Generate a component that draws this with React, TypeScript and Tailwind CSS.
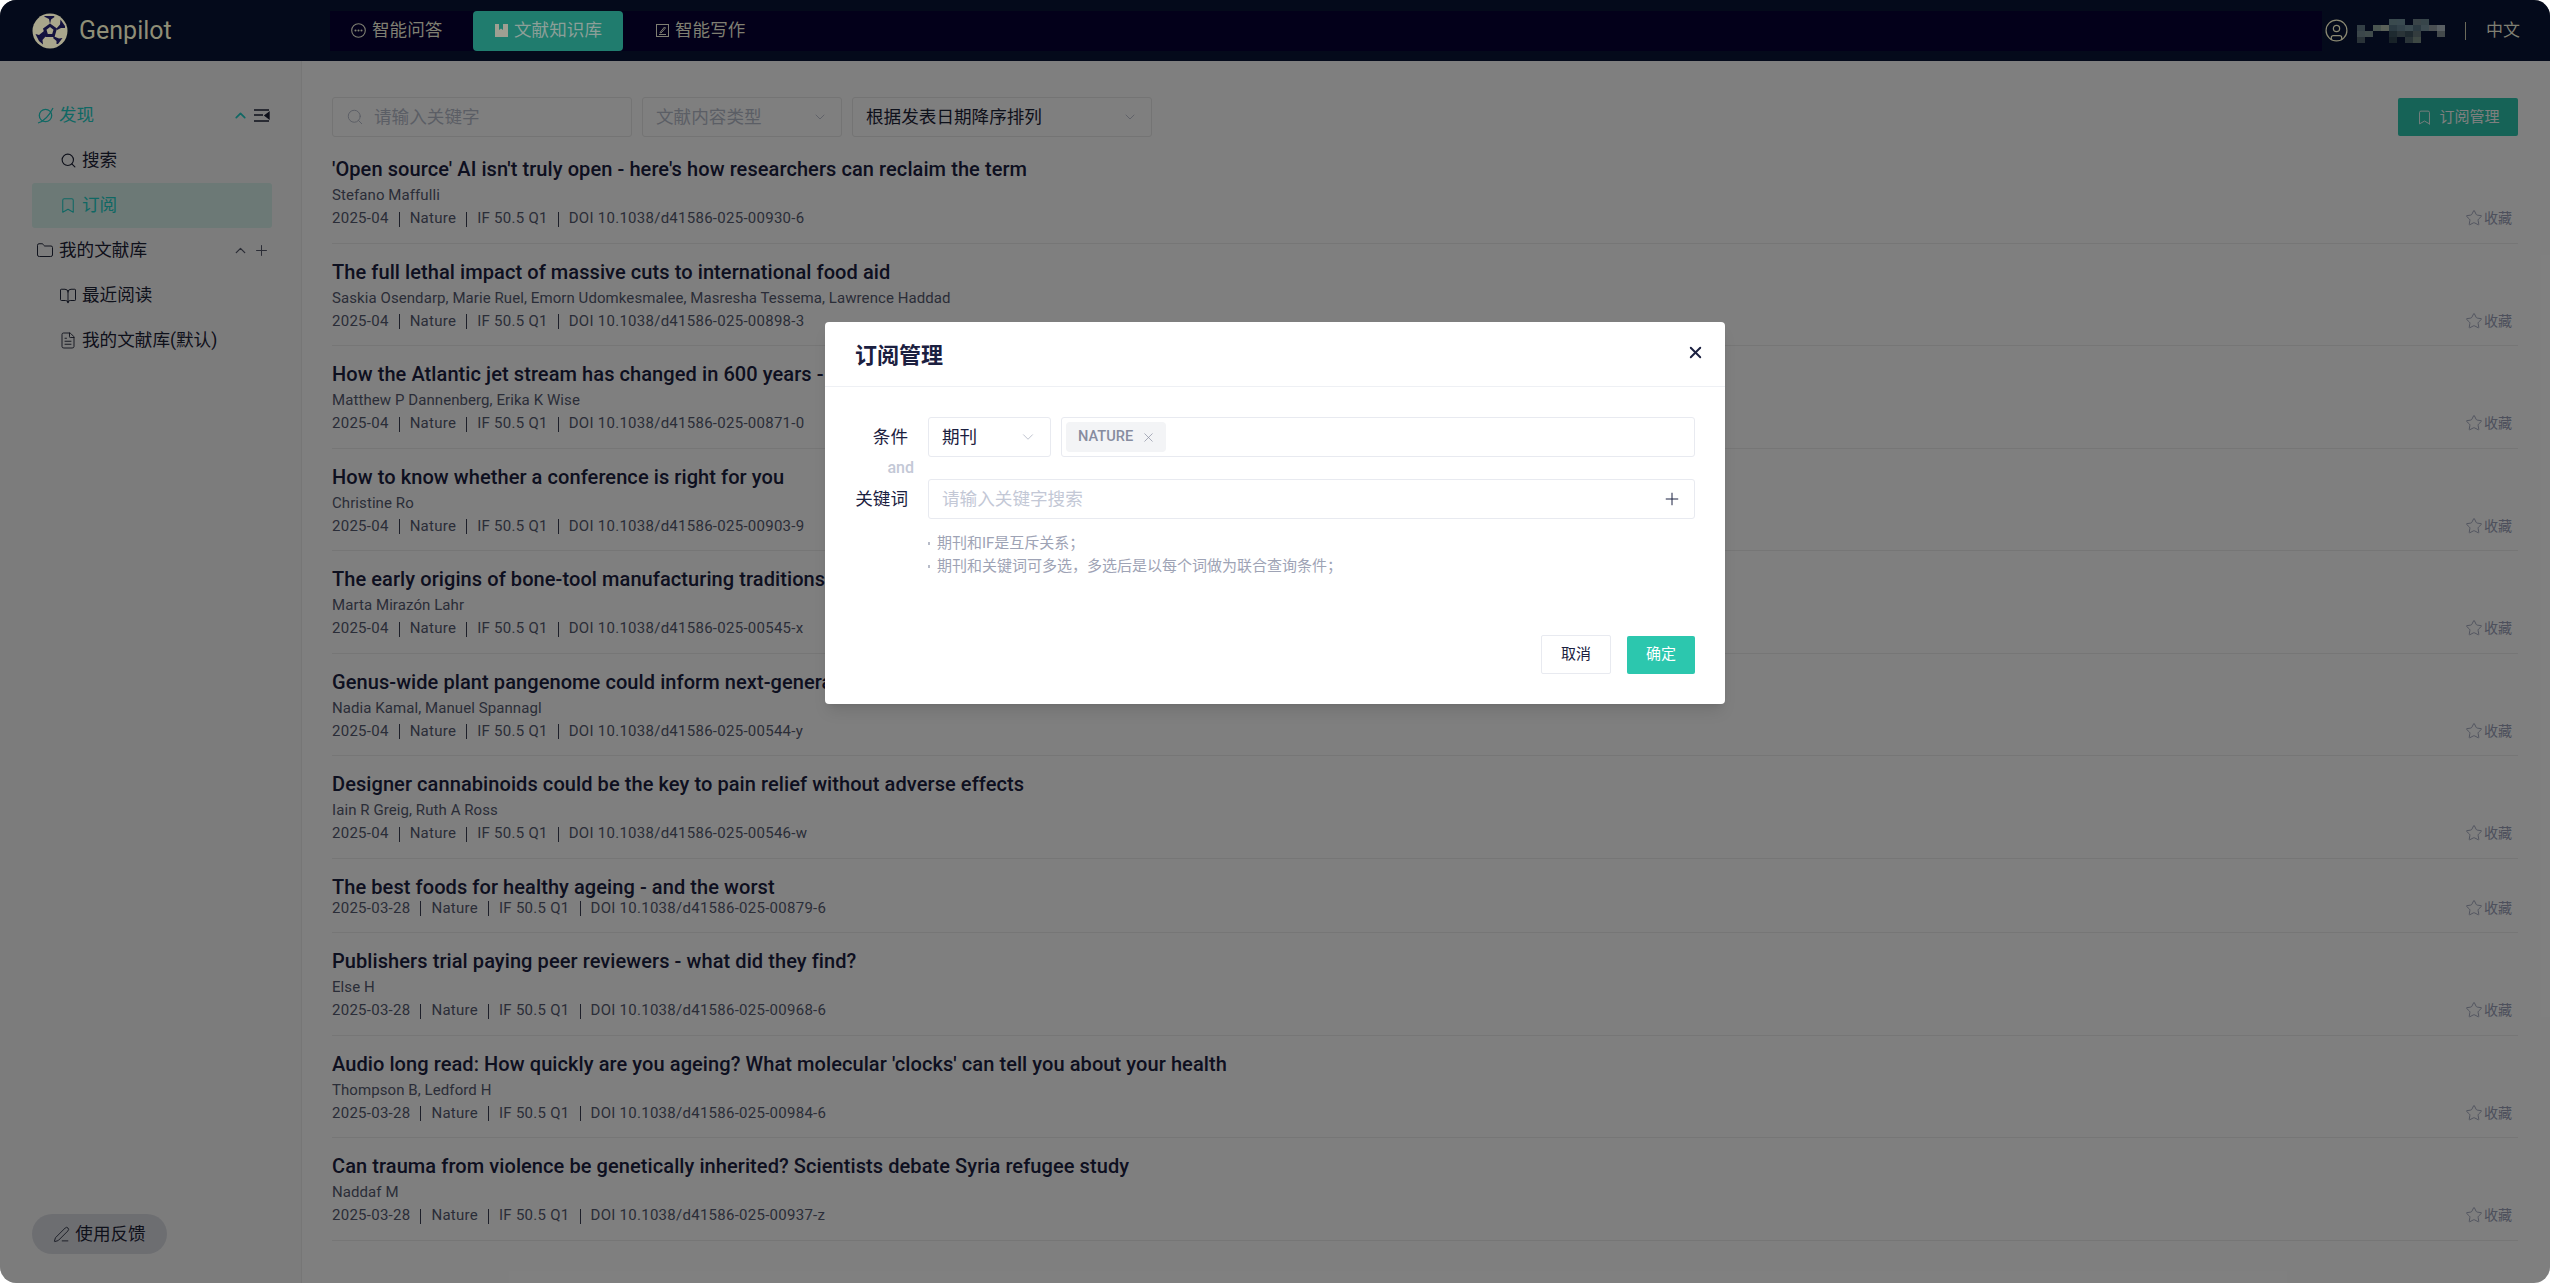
import { Bookmark, BookOpen, ChevronDown, ChevronUp, CircleUser, FileText, Folder, Plus, Search, Star, X, PenLine } from "lucide-react";

type Paper = { title: string; authors?: string; date: string; doi: string };

const papers: Paper[] = [
  { title: "'Open source' AI isn't truly open - here's how researchers can reclaim the term", authors: "Stefano Maffulli", date: "2025-04", doi: "10.1038/d41586-025-00930-6" },
  { title: "The full lethal impact of massive cuts to international food aid", authors: "Saskia Osendarp, Marie Ruel, Emorn Udomkesmalee, Masresha Tessema, Lawrence Haddad", date: "2025-04", doi: "10.1038/d41586-025-00898-3" },
  { title: "How the Atlantic jet stream has changed in 600 years -", authors: "Matthew P Dannenberg, Erika K Wise", date: "2025-04", doi: "10.1038/d41586-025-00871-0" },
  { title: "How to know whether a conference is right for you", authors: "Christine Ro", date: "2025-04", doi: "10.1038/d41586-025-00903-9" },
  { title: "The early origins of bone-tool manufacturing traditions", authors: "Marta Mirazón Lahr", date: "2025-04", doi: "10.1038/d41586-025-00545-x" },
  { title: "Genus-wide plant pangenome could inform next-generation", authors: "Nadia Kamal, Manuel Spannagl", date: "2025-04", doi: "10.1038/d41586-025-00544-y" },
  { title: "Designer cannabinoids could be the key to pain relief without adverse effects", authors: "Iain R Greig, Ruth A Ross", date: "2025-04", doi: "10.1038/d41586-025-00546-w" },
  { title: "The best foods for healthy ageing - and the worst", date: "2025-03-28", doi: "10.1038/d41586-025-00879-6" },
  { title: "Publishers trial paying peer reviewers - what did they find?", authors: "Else H", date: "2025-03-28", doi: "10.1038/d41586-025-00968-6" },
  { title: "Audio long read: How quickly are you ageing? What molecular 'clocks' can tell you about your health", authors: "Thompson B, Ledford H", date: "2025-03-28", doi: "10.1038/d41586-025-00984-6" },
  { title: "Can trauma from violence be genetically inherited? Scientists debate Syria refugee study", authors: "Naddaf M", date: "2025-03-28", doi: "10.1038/d41586-025-00937-z" },
];

const font = "font-['Roboto','Noto_Sans_CJK_SC',sans-serif]";

function Logo() {
  return (
    <svg width="36" height="36" viewBox="0 0 36 36">
      <circle cx="18" cy="18" r="17.5" fill="#a9a68c" />
      <path d="M18 10.5 L25 15.5 L22.5 24 L13.5 24 L11 15.5 Z M18 14 L14.5 16.8 L15.8 21 L20.2 21 L21.5 16.8 Z" fill="#14123f" fillRule="evenodd" />
      <path d="M18 11 L17 6 L12 3.5 L13 3 L22 3 L22.5 4 L19 6.5 Z" fill="#14123f" />
      <path d="M24.5 15.5 L28 11.5 L28.5 6.5 L33 13 L33 15 L29 15 L25 17 Z" fill="#14123f" />
      <path d="M22 23.5 L27 25.5 L30.5 25 L26 31 L24.5 31 L24.5 28 L21 25 Z" fill="#14123f" />
      <path d="M14 23 L10.5 27 L11 31.5 L7 28 L3.5 21 L7 22 L12 18 Z" fill="#14123f" />
    </svg>
  );
}

function Mosaic() {
  const cells: [number, number, string][] = [
    [0, 2, "#333f45"], [0, 3, "#3b464a"], [1, 3, "#3f4a4a"], [2, 2, "#4a5550"], [3, 2, "#5a6058"], [4, 1, "#3a4a4e"], [4, 2, "#2b3a42"],
    [5, 1, "#3a4a50"], [5, 2, "#33424a"], [6, 2, "#3b4a50"], [7, 1, "#3a4448"], [7, 2, "#2c3a42"], [8, 1, "#37454a"], [8, 2, "#3c4a50"],
    [9, 2, "#4a4f52"], [10, 2, "#5a6064"], [10, 3, "#444a4c"], [0, 4, "#2a3338"], [4, 3, "#1e2a30"], [5, 3, "#2a3438"], [6, 3, "#1f2a30"], [7, 3, "#333c3e"], [7, 4, "#3e4844"], [6, 4, "#2a3438"], [4, 4, "#182228"],
  ];
  return (
    <svg width="88" height="24" viewBox="0 0 88 24">
      {cells.map(([x, y, c], i) => (
        <rect key={i} x={x * 8} y={(y - 1) * 6} width="8" height="6" fill={c} />
      ))}
    </svg>
  );
}

function Header() {
  return (
    <header className="relative z-20 flex h-[61px] shrink-0 items-center bg-[#040a1b] pl-[32px] pr-[28px]">
      <Logo />
      <span className="ml-[11px] w-[251px] text-[25px] leading-none text-[#8f8e76]">Genpilot</span>
      <nav className="flex h-[40px] w-[1992px] items-center bg-[#03001a] text-[17.6px] text-[#7f7f72]">
        <a className="flex h-full w-[143px] items-center gap-[6px] pl-[21px]">
          <svg width="15" height="15" viewBox="0 0 15 15" fill="none" stroke="currentColor" strokeWidth="1.1">
            <circle cx="7.5" cy="7.5" r="6.8" />
            <circle cx="4.5" cy="7.5" r="0.5" fill="currentColor" />
            <circle cx="7.5" cy="7.5" r="0.5" fill="currentColor" />
            <circle cx="10.5" cy="7.5" r="0.5" fill="currentColor" />
          </svg>
          智能问答
        </a>
        <a className="flex h-full w-[150px] items-center gap-[6px] rounded-[4px] bg-[#207c6e] pl-[22px] text-[#8c9f98]">
          <svg width="13" height="13" viewBox="0 0 13 13" fill="#9f9f92">
            <path d="M0 0 H4 V6 L6 4.5 L8 6 V0 H13 V13 H0 Z" />
          </svg>
          文献知识库
        </a>
        <a className="flex h-full w-[150px] items-center gap-[6px] pl-[33px]">
          <svg width="13" height="13" viewBox="0 0 13 13" fill="none" stroke="currentColor" strokeWidth="1">
            <rect x="0.5" y="0.5" width="12" height="12" />
            <path d="M3 10.5 H10 M4 8.5 L8.5 3 L9.5 4 L5 9 Z" />
          </svg>
          智能写作
        </a>
      </nav>
      <div className="ml-[2px] flex items-center text-[#8a8872]">
        <CircleUser size={25} strokeWidth={1.2} />
        <span className="ml-[8px]"><Mosaic /></span>
        <span className="mx-[20px] h-[18px] border-l border-[#6b6a5a]" />
        <span className="text-[17px] text-[#7f7f72]">中文</span>
      </div>
    </header>
  );
}

function SideRow({ icon, label, active, sub, extra, green }: { icon: React.ReactNode; label: string; active?: boolean; sub?: boolean; extra?: React.ReactNode; green?: boolean }) {
  return (
    <div className={`flex h-[45px] items-center rounded-[3px] text-[17.6px] ${sub ? "pl-[27px]" : "pl-[4px]"} ${active ? "bg-[#d8f2ec]" : ""} ${active || green ? "text-[#20d0c8]" : "text-[#1d2236]"}`}>
      <span className="mr-[5px] flex w-[18px] justify-center">{icon}</span>
      <span className="whitespace-nowrap">{label}</span>
      {extra && <span className="ml-auto mr-[2px] flex items-center gap-[4px]">{extra}</span>}
    </div>
  );
}

function Sidebar() {
  return (
    <aside className="flex w-[302px] shrink-0 flex-col border-r border-[#ececec] bg-[#f9f9f9] pl-[32px] pr-[29px] pt-[32px]">
      <SideRow
        green
        icon={
          <svg width="17" height="17" viewBox="0 0 17 17" fill="none" stroke="currentColor" strokeWidth="1.3">
            <circle cx="8.5" cy="8.5" r="6.2" />
            <path d="M1 16 C6 14.5 12 9 16 1" />
          </svg>
        }
        label="发现"
        extra={
          <>
            <ChevronUp size={17} strokeWidth={2.4} color="#20d0c8" />
            <svg width="17" height="15" viewBox="0 0 17 15" fill="none" stroke="#1d2236" strokeWidth="1.4">
              <path d="M1 2 H16 M1 7 H10 M1 13 H16" />
              <path d="M16 4.5 L12 7.5 L16 10.5 Z" fill="#1d2236" />
            </svg>
          </>
        }
      />
      <SideRow sub icon={<Search size={17} strokeWidth={1.6} />} label="搜索" />
      <SideRow sub active icon={<Bookmark size={19} strokeWidth={1.4} />} label="订阅" />
      <SideRow
        icon={<Folder size={19} strokeWidth={1.3} />}
        label="我的文献库"
        extra={
          <>
            <ChevronUp size={17} strokeWidth={1.8} color="#54586a" />
            <Plus size={17} strokeWidth={1.4} color="#54586a" />
          </>
        }
      />
      <SideRow sub icon={<BookOpen size={18} strokeWidth={1.3} />} label="最近阅读" />
      <SideRow sub icon={<FileText size={19} strokeWidth={1.2} />} label="我的文献库(默认)" />
      <button className="mb-[29px] mt-auto flex h-[40px] w-[135px] items-center justify-center gap-[5px] rounded-full bg-[#dbdde3] text-[17.6px] text-[#1d2236]">
        <PenLine size={17} strokeWidth={1.2} />
        使用反馈
      </button>
    </aside>
  );
}

function Filter({ className, children }: { className: string; children: React.ReactNode }) {
  return <div className={`flex h-[40px] items-center rounded-[3px] border border-[#e8e8e8] px-[13px] text-[17.6px] ${className}`}>{children}</div>;
}

function Sep() {
  return <span className="mx-[10px] inline-block h-[15px] translate-y-[1px] border-l border-[#3a3e52]" />;
}

function PaperRow({ p }: { p: Paper }) {
  return (
    <div className="border-b border-[#ececec] pb-[14.5px] pt-[14px]">
      <div className="h-[26px] text-[20px] font-medium leading-[28px] tracking-[0.08px] text-[#1b2040]">{p.title}</div>
      {p.authors && <div className="mt-[4px] h-[20px] text-[15px] leading-[20px] tracking-[0.08px] text-[#555a70]">{p.authors}</div>}
      <div className={`flex h-[20px] items-center text-[15px] leading-[20px] tracking-[0.27px] text-[#555a70] ${p.authors ? "mt-[3px]" : "-mt-[1px]"}`}>
        <span>{p.date}</span>
        <Sep />
        <span>Nature</span>
        <Sep />
        <span>IF 50.5 Q1</span>
        <Sep />
        <span>DOI {p.doi}</span>
        <span className="ml-auto mr-[6px] flex items-center gap-[1px] text-[14px] tracking-normal text-[#9aa0b8]">
          <Star size={18} strokeWidth={1.2} />
          收藏
        </span>
      </div>
    </div>
  );
}

function Main() {
  return (
    <main className="min-w-0 flex-1 pl-[30px] pr-[32px] pt-[36px]">
      <div className="flex items-center gap-[10px]">
        <Filter className="w-[300px] text-[#b7bccb]">
          <Search size={18} strokeWidth={1.3} className="mr-[10px] text-[#b7bccb]" />
          请输入关键字
        </Filter>
        <Filter className="w-[200px] justify-between text-[#b7bccb]">
          文献内容类型
          <ChevronDown size={16} strokeWidth={1.3} />
        </Filter>
        <Filter className="w-[300px] justify-between text-[#1d2236]">
          根据发表日期降序排列
          <ChevronDown size={16} strokeWidth={1.3} className="text-[#b7bccb]" />
        </Filter>
        <button className="ml-auto flex h-[38px] w-[120px] items-center justify-center gap-[6px] rounded-[2px] bg-[#2cc7ae] text-[15px] text-white">
          <Bookmark size={17} strokeWidth={1.3} />
          订阅管理
        </button>
      </div>
      <div className="mt-[4px]">
        {papers.map((p) => (
          <PaperRow key={p.doi} p={p} />
        ))}
      </div>
    </main>
  );
}

function Dialog() {
  return (
    <div className="h-[382px] w-[900px] rounded-[4px] bg-white text-[#1b2040] shadow-lg">
      <div className="flex h-[65px] items-center justify-between border-b border-[#eef0f4] pl-[30px] pr-[22px]">
        <h2 className="mt-[4px] text-[22px] font-bold leading-[30px]">订阅管理</h2>
        <X size={19} strokeWidth={2.4} className="-mt-[3px] mr-[-2px]" />
      </div>
      <div className="relative pl-[30px] pr-[30px] pt-[30px]">
        <div className="flex items-center">
          <span className="w-[53px] text-right text-[17.6px]">条件</span>
          <div className="ml-[20px] flex h-[40px] w-[123px] items-center justify-between rounded-[3px] border border-[#e8eaf0] px-[13px] text-[17.6px]">
            期刊
            <ChevronDown size={18} strokeWidth={1} className="text-[#a8adbd]" />
          </div>
          <div className="ml-[10px] flex h-[40px] flex-1 items-center rounded-[3px] border border-[#e8eaf0] px-[4px]">
            <span className="flex h-[30px] w-[100px] items-center gap-[8px] rounded-[4px] bg-[#f3f4f6] pl-[12px] text-[14.6px] font-medium text-[#878c9f]">
              NATURE
              <X size={15} strokeWidth={1.1} />
            </span>
          </div>
        </div>
        <div className="h-[22px] pr-[781px] text-right text-[16px] font-medium leading-[22px] text-[#c3c8d6]">and</div>
        <div className="flex items-center">
          <span className="w-[53px] text-right text-[17.6px]">关键词</span>
          <div className="ml-[20px] flex h-[40px] flex-1 items-center justify-between rounded-[3px] border border-[#e8eaf0] pl-[13px] pr-[12px] text-[17.6px] text-[#c3c8d6]">
            请输入关键字搜索
            <Plus size={20} strokeWidth={1.2} className="text-[#1b2040]" />
          </div>
        </div>
        <ul className="ml-[73px] mt-[13px] text-[15px] leading-[23px] text-[#9ea3b5]">
          <li className="flex items-center gap-[7px]"><span className="h-[3px] w-[2px] bg-[#b8bcc9]" />{"期刊和IF是互斥关系\uFF1B"}</li>
          <li className="flex items-center gap-[7px]"><span className="h-[3px] w-[2px] bg-[#b8bcc9]" />{"期刊和关键词可多选\uFF0C多选后是以每个词做为联合查询条件\uFF1B"}</li>
        </ul>
        <div className="mt-[57px] flex items-center justify-end gap-[16px]">
          <button className="h-[39px] w-[70px] rounded-[2px] border border-[#e8eaf0] text-[15px]">取消</button>
          <button className="h-[38px] w-[68px] rounded-[2px] bg-[#2cc7ae] text-[15px] text-white">确定</button>
        </div>
      </div>
    </div>
  );
}

export default function App() {
  return (
    <div className={`h-[1283px] w-[2550px] bg-white ${font}`}>
      <div className="relative flex h-full flex-col overflow-hidden rounded-[16px] bg-white">
        <Header />
        <div className="flex min-h-0 flex-1">
          <Sidebar />
          <Main />
        </div>
        <div className="absolute inset-0 z-10 flex justify-center bg-black/50 pt-[322px]">
          <Dialog />
        </div>
      </div>
    </div>
  );
}
